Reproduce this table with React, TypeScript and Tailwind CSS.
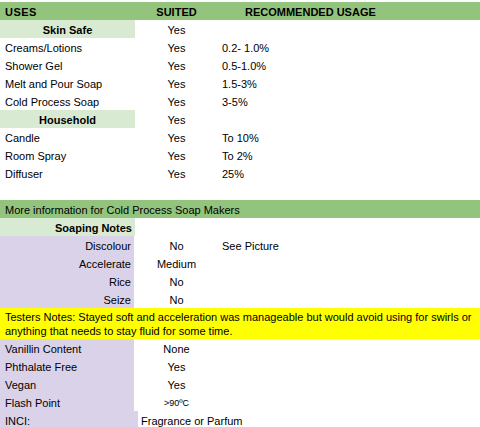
import React from "react";

const G = "bg-[#93c47d]";
const LG = "bg-[#d9ead3]";
const LV = "bg-[#d9d2e9]";

function Row({ a, b, c, aCls = "", bCls = "", cCls = "" }: { a?: React.ReactNode; b?: React.ReactNode; c?: React.ReactNode; aCls?: string; bCls?: string; cCls?: string }) {
  return (
    <div className="grid grid-cols-[135px_83px_1fr] h-[18px]">
      <div className={`flex items-center pt-[2px] px-[5px] whitespace-nowrap ${aCls}`}>{a}</div>
      <div className={`flex items-center pt-[2px] justify-center whitespace-nowrap ${bCls}`}>{b}</div>
      <div className={`flex items-center pt-[2px] px-[4px] whitespace-nowrap ${cCls}`}>{c}</div>
    </div>
  );
}

export default function App() {
  return (
    <div
      className="w-[480px] h-[427px] overflow-hidden bg-white text-black text-[11px] leading-[13px] pt-[2px]"
      style={{ fontFamily: '"Liberation Sans", Arial, sans-serif' }}
    >
      <div className={`grid grid-cols-[135px_83px_1fr] h-[18px] ${G} font-bold`}>
        <div className="flex items-center pt-[2px] px-[5px] tracking-[0.5px]">USES</div>
        <div className="flex items-center pt-[2px] justify-center">SUITED</div>
        <div className="flex items-center pt-[2px] pl-[27px]">RECOMMENDED USAGE</div>
      </div>
      <Row a="Skin Safe" aCls={`${LG} justify-center font-bold`} b="Yes" />
      <Row a="Creams/Lotions" b="Yes" c="0.2- 1.0%" />
      <Row a="Shower Gel" b="Yes" c="0.5-1.0%" />
      <Row a="Melt and Pour Soap" b="Yes" c="1.5-3%" />
      <Row a="Cold Process Soap" b="Yes" c="3-5%" />
      <Row a="Household" aCls={`${LG} justify-center font-bold`} b="Yes" />
      <Row a="Candle" b="Yes" c="To 10%" />
      <Row a="Room Spray" b="Yes" c="To 2%" />
      <Row a="Diffuser" b="Yes" c="25%" />
      <div className="h-[18px]" />
      <div className={`h-[18px] ${G} flex items-center pt-[2px] px-[5px]`}>More information for Cold Process Soap Makers</div>
      <Row a="Soaping Notes" aCls={`${LG} justify-end font-bold pr-[3px]`} />
      <Row a="Discolour" aCls={`${LV} justify-end pr-[3px] mr-[1px]`} b="No" c="See Picture" />
      <Row a="Accelerate" aCls={`${LV} justify-end pr-[3px] mr-[1px]`} b="Medium" />
      <Row a="Rice" aCls={`${LV} justify-end pr-[3px] mr-[1px]`} b="No" />
      <Row a="Seize" aCls={`${LV} justify-end pr-[3px] mr-[1px]`} b="No" />
      <div className="h-[31px] bg-[#ffff00] px-[5px] pt-[1px] flex flex-col justify-center leading-[14px]">
        <div className="whitespace-nowrap">Testers Notes: Stayed soft and acceleration was manageable but would avoid using for swirls or</div>
        <div className="whitespace-nowrap">anything that needs to stay fluid for some time.</div>
      </div>
      <Row a="Vanillin Content" aCls={`${LV} mr-[1px]`} b="None" />
      <Row a="Phthalate Free" aCls={`${LV} mr-[1px]`} b="Yes" />
      <Row a="Vegan" aCls={`${LV} mr-[1px]`} b="Yes" />
      <Row a="Flash Point" aCls={`${LV} mr-[1px]`} b={<span className="text-[9px]">&gt;90ºC</span>} />
      <div className="grid grid-cols-[138px_1fr] h-[18px]">
        <div className={`flex items-center pt-[2px] px-[5px] ${LV}`}>INCI:</div>
        <div className="flex items-center pt-[2px] pl-[3px] whitespace-nowrap">Fragrance or Parfum</div>
      </div>
    </div>
  );
}
